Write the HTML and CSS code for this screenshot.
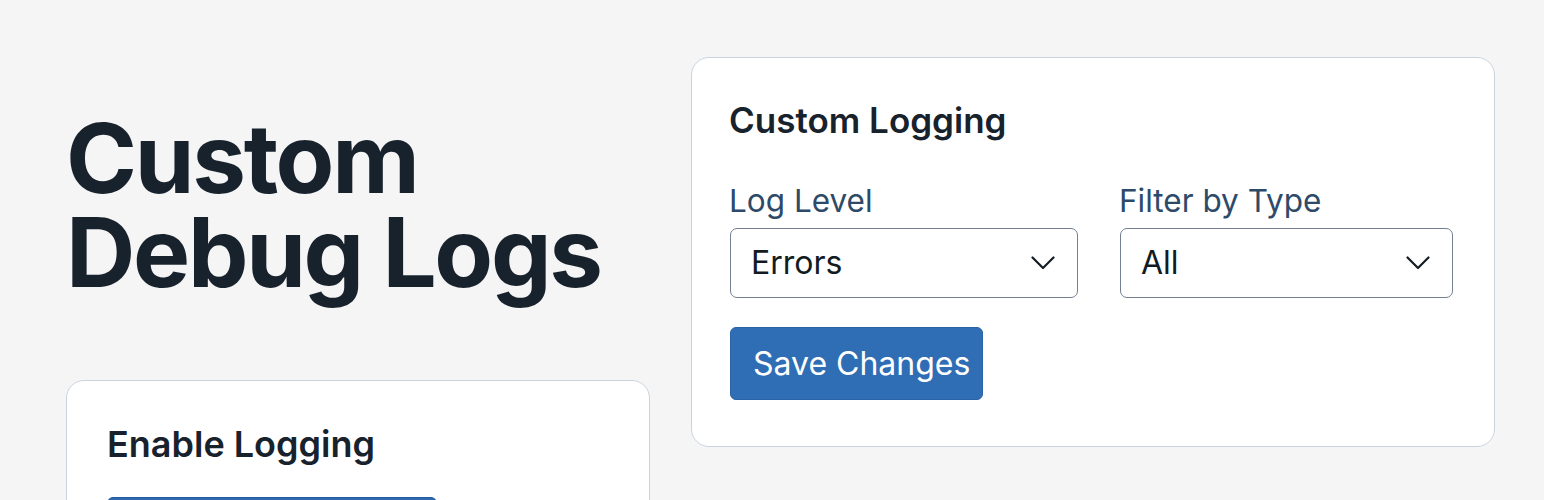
FILE: index.html
```html
<!DOCTYPE html>
<html lang="en">
<head>
<meta charset="utf-8">
<title>Custom Debug Logs</title>
<link rel="stylesheet" href="styles.css">
</head>
<body>
<div class="page">
  <div class="left-col">
    <h1 class="title">Custom<br>Debug Logs</h1>
    <section class="card card-enable">
      <h2 class="card-title">Enable Logging</h2>
      <button class="btn btn-enable" type="button">Enable</button>
    </section>
  </div>
  <div class="right-col">
    <section class="card card-custom">
      <h2 class="card-title">Custom Logging</h2>
      <div class="fields">
        <div class="field">
          <label class="field-label">Log Level</label>
          <div class="select">
            <span class="select-value">Errors</span>
            <svg class="chev" width="24" height="14" viewBox="0 0 24 14"><polyline points="1.5,1.5 12,12 22.5,1.5" fill="none" stroke="#141c24" stroke-width="2.2" stroke-linecap="round" stroke-linejoin="round"/></svg>
          </div>
        </div>
        <div class="field">
          <label class="field-label">Filter by Type</label>
          <div class="select">
            <span class="select-value">All</span>
            <svg class="chev" width="24" height="14" viewBox="0 0 24 14"><polyline points="1.5,1.5 12,12 22.5,1.5" fill="none" stroke="#141c24" stroke-width="2.2" stroke-linecap="round" stroke-linejoin="round"/></svg>
          </div>
        </div>
      </div>
      <button class="btn btn-save" type="button">Save Changes</button>
    </section>
  </div>
</div>
</body>
</html>
```

FILE: styles.css
```css
* { box-sizing: border-box; }

html, body {
  margin: 0;
  height: 100%;
  overflow: hidden;
}

body {
  background: #f5f5f5;
  font-family: Inter, "Noto Sans", "Liberation Sans", sans-serif;
  color: #17222c;
}

.page {
  display: flex;
  gap: 41px;
  padding: 57px 49px 0 66px;
}

.left-col {
  width: 584px;
  flex: none;
}

.right-col {
  flex: 1;
}

.title {
  margin: 54px 0 81px 0;
  font-size: 96px;
  line-height: 94px;
  font-weight: 700;
  letter-spacing: -2.3px;
  color: #17222c;
}

.card {
  background: #fff;
  border: 1px solid #c9d4e1;
  border-radius: 18px;
}

.card-enable {
  padding: 42px 41px 40px 40px;
  height: 200px;
}

.card-custom {
  padding: 41px 41px 46px 37px;
}

.card-title {
  margin: 0;
  font-size: 35px;
  line-height: 42px;
  font-weight: 600;
  color: #17222c;
}

.card-enable .card-title {
  font-size: 36px;
}

.card-enable .btn-enable {
  margin-top: 32px;
  width: 330px;
  height: 70px;
  background: #2d69b0;
  border-color: #245ca0;
  color: #fff;
}

.fields {
  display: grid;
  grid-template-columns: 348px 333px;
  column-gap: 42px;
  margin-top: 42px;
  margin-left: 1px;
}

.field {
  display: flex;
  flex-direction: column;
}

.field-label {
  font-size: 31.5px;
  line-height: 36px;
  font-weight: 400;
  color: #2e4a69;
  margin-bottom: 9px;
  margin-left: -1px;
}

.select {
  height: 70px;
  border: 1.5px solid #728091;
  border-radius: 7px;
  background: #fff;
  display: flex;
  align-items: center;
  justify-content: space-between;
  padding: 0 22px 0 20px;
}

.select-value {
  font-size: 32px;
  line-height: 36px;
  color: #121a22;
}

.chev {
  flex: none;
}

.btn {
  font-family: Inter, "Noto Sans", "Liberation Sans", sans-serif;
  border: 1px solid #2a62a6;
  border-radius: 6px;
  cursor: pointer;
}

.btn-save {
  margin-top: 29px;
  margin-left: 1px;
  height: 73px;
  padding: 0 12px 0 22px;
  background: #2f6db4;
  color: #fff;
  font-size: 32px;
  font-weight: 400;
  line-height: 36px;
}
```
